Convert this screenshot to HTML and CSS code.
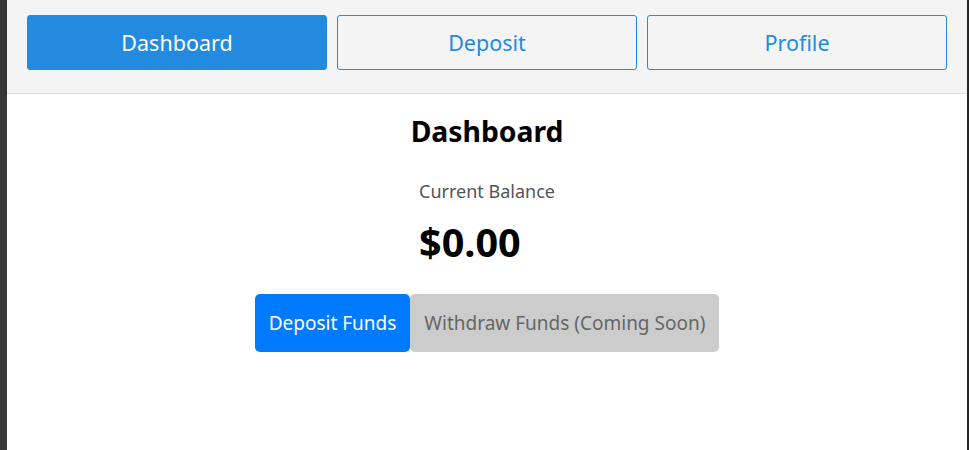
FILE: index.html
```html
<!DOCTYPE html>
<html>
<head>
<meta charset="utf-8">
<link rel="stylesheet" href="styles.css">
</head>
<body>
<div class="frame">
  <nav class="nav">
    <button class="tab tab-active">Dashboard</button>
    <button class="tab">Deposit</button>
    <button class="tab">Profile</button>
  </nav>
  <main class="content">
    <h2 class="title">Dashboard</h2>
    <div class="balance">
      <div class="balance-label">Current Balance</div>
      <div class="balance-amount">$0.00</div>
    </div>
    <div class="actions">
      <button class="btn btn-primary">Deposit Funds</button>
      <button class="btn btn-disabled">Withdraw Funds (Coming Soon)</button>
    </div>
  </main>
</div>
</body>
</html>
```
FILE: styles.css
```css
html, body {
  margin: 0;
  padding: 0;
  height: 100%;
  background: #ffffff;
}
body {
  font-family: "Noto Sans", "Open Sans", sans-serif;
}
.frame {
  height: 100%;
  box-sizing: border-box;
  border-left: 7px solid #383838;
  border-right: 2px solid #252525;
  display: flex;
  flex-direction: column;
}
.nav {
  display: flex;
  gap: 10px;
  padding: 15px 20px 23px;
  background: #f4f4f4;
  border-bottom: 1px solid #dddddd;
}
.tab {
  flex: 1;
  height: 55px;
  font-family: inherit;
  font-size: 21.5px;
  color: #228be0;
  background: transparent;
  border: 1px solid #228be0;
  border-radius: 3px;
  cursor: pointer;
}
.tab-active {
  background: #228be0;
  color: #ffffff;
}
.content {
  display: flex;
  flex-direction: column;
  align-items: center;
}
.title {
  margin: 17px 0 0;
  font-size: 28.3px;
  font-weight: 700;
  color: #000;
  line-height: 40px;
}
.balance {
  margin-top: 27px;
  text-align: left;
}
.balance-label {
  font-size: 18px;
  color: #555555;
  line-height: 26px;
}
.balance-amount {
  font-size: 39.6px;
  font-weight: 700;
  color: #000;
  line-height: 52px;
  margin-top: 12px;
}
.actions {
  display: flex;
  margin-top: 26px;
}
.btn {
  font-family: inherit;
  font-size: 19px;
  height: 58px;
  padding: 0 14px;
  border: none;
  border-radius: 5px;
}
.btn-primary {
  background: #007bff;
  color: #ffffff;
}
.btn-disabled {
  background: #cccccc;
  color: #666666;
}
```
